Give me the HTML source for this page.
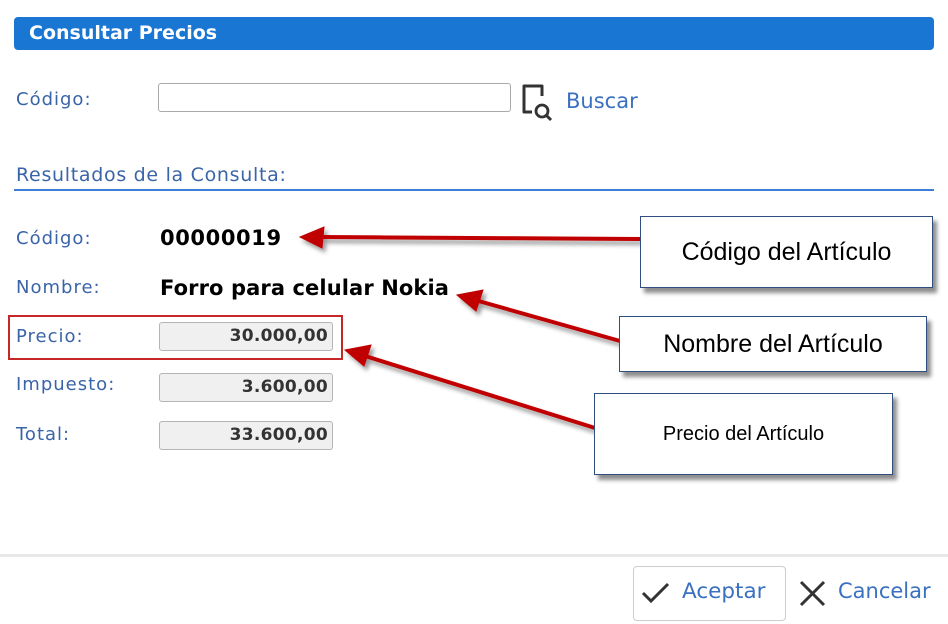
<!DOCTYPE html>
<html><head><meta charset="utf-8"><style>
body{margin:0;width:948px;height:624px;background:#fff;position:relative;overflow:hidden;font-family:"DejaVu Sans","Liberation Sans",sans-serif}
.a{position:absolute;white-space:nowrap}
.lbl{color:#3a64a8;font-size:18px;letter-spacing:1px}
.box{position:absolute;background:#f0f0f0;border:1px solid #b5b5b5;border-radius:3px;height:29px;width:174px;text-align:right;box-sizing:border-box;padding-right:4px;line-height:27px;font-weight:bold;font-size:17px;color:#333;letter-spacing:.3px}
.call{position:absolute;border:1.5px solid #2f4f80;background:#fff;box-shadow:4px 5px 4px rgba(0,0,0,.45);font-family:"Liberation Sans",sans-serif;color:#000;text-align:center;box-sizing:border-box}
</style></head><body>
<div class="a" style="left:14px;top:17px;width:920px;height:33px;background:#1976d2;border-radius:4px"></div>
<div class="a" style="left:29px;top:22px;color:#fff;font-weight:bold;font-size:19px">Consultar Precios</div>
<div class="a lbl" style="left:16px;top:89px">Código:</div>
<div class="a" style="left:158px;top:83px;width:353px;height:29px;border:1px solid #aaa;border-radius:3px;box-sizing:border-box"></div>
<svg class="a" style="left:520px;top:82px" width="40" height="42"><path d="M12 30H4V4H22V14" fill="none" stroke="#333" stroke-width="3" stroke-linejoin="round"/><circle cx="22" cy="29" r="6" fill="none" stroke="#333" stroke-width="2.8"/><path d="M26 33L31 38" stroke="#333" stroke-width="3"/></svg>
<div class="a" style="left:566px;top:89px;color:#3a70c0;font-size:21px">Buscar</div>
<div class="a lbl" style="left:16px;top:164px;font-size:19px;letter-spacing:.7px">Resultados de la Consulta:</div>
<div class="a" style="left:14px;top:189px;width:920px;height:2px;background:#3b80d6"></div>
<div class="a lbl" style="left:16px;top:228px">Código:</div>
<div class="a" style="left:160px;top:226px;font-weight:bold;font-size:21px;letter-spacing:.6px">00000019</div>
<div class="a lbl" style="left:16px;top:277px">Nombre:</div>
<div class="a" style="left:160px;top:276px;font-weight:bold;font-size:21px;letter-spacing:.1px">Forro para celular Nokia</div>
<div class="a" style="left:8px;top:315px;width:335px;height:45px;border:2px solid #c62828;box-sizing:border-box"></div>
<div class="a lbl" style="left:16px;top:326px">Precio:</div>
<div class="box" style="left:159px;top:322px">30.000,00</div>
<div class="a lbl" style="left:16px;top:374px">Impuesto:</div>
<div class="box" style="left:159px;top:373px">3.600,00</div>
<div class="a lbl" style="left:16px;top:424px">Total:</div>
<div class="box" style="left:159px;top:421px">33.600,00</div>
<svg class="a" style="left:0;top:0" width="948" height="624">
<defs><filter id="s"><feDropShadow dx="3" dy="4" stdDeviation="2" flood-opacity=".4"/></filter></defs>
<g filter="url(#s)" stroke="#c00000" fill="#c00000">
<path d="M640 239L318 237" stroke-width="4"/><path d="M300 237L324 227L322 248Z"/>
<path d="M620 341L475 300" stroke-width="4"/><path d="M457 295L483 290L476 311Z"/>
<path d="M595 428L362 355" stroke-width="4"/><path d="M345 350L371 345L364 366Z"/>
</g></svg>
<div class="call" style="left:640px;top:216px;width:293px;height:72px;font-size:25px;line-height:70px">Código del Artículo</div>
<div class="call" style="left:619px;top:316px;width:308px;height:56px;font-size:25px;line-height:54px">Nombre del Artículo</div>
<div class="call" style="left:594px;top:393px;width:299px;height:82px;font-size:20px;line-height:80px">Precio del Artículo</div>
<div class="a" style="left:0;top:554px;width:948px;height:3px;background:#e8e8e8"></div>
<div class="a" style="left:633px;top:566px;width:153px;height:55px;border:1px solid #ccc;border-radius:4px;box-sizing:border-box"></div>
<svg class="a" style="left:640px;top:580px" width="32" height="26"><path d="M3 13L11 21L28 4" fill="none" stroke="#333" stroke-width="3"/></svg>
<div class="a" style="left:682px;top:579px;color:#3a70c0;font-size:21.5px">Aceptar</div>
<svg class="a" style="left:798px;top:579px" width="30" height="30"><path d="M3 3L26 26M26 3L3 26" stroke="#333" stroke-width="3"/></svg>
<div class="a" style="left:838px;top:579px;color:#3a70c0;font-size:21px">Cancelar</div>
</body></html>
